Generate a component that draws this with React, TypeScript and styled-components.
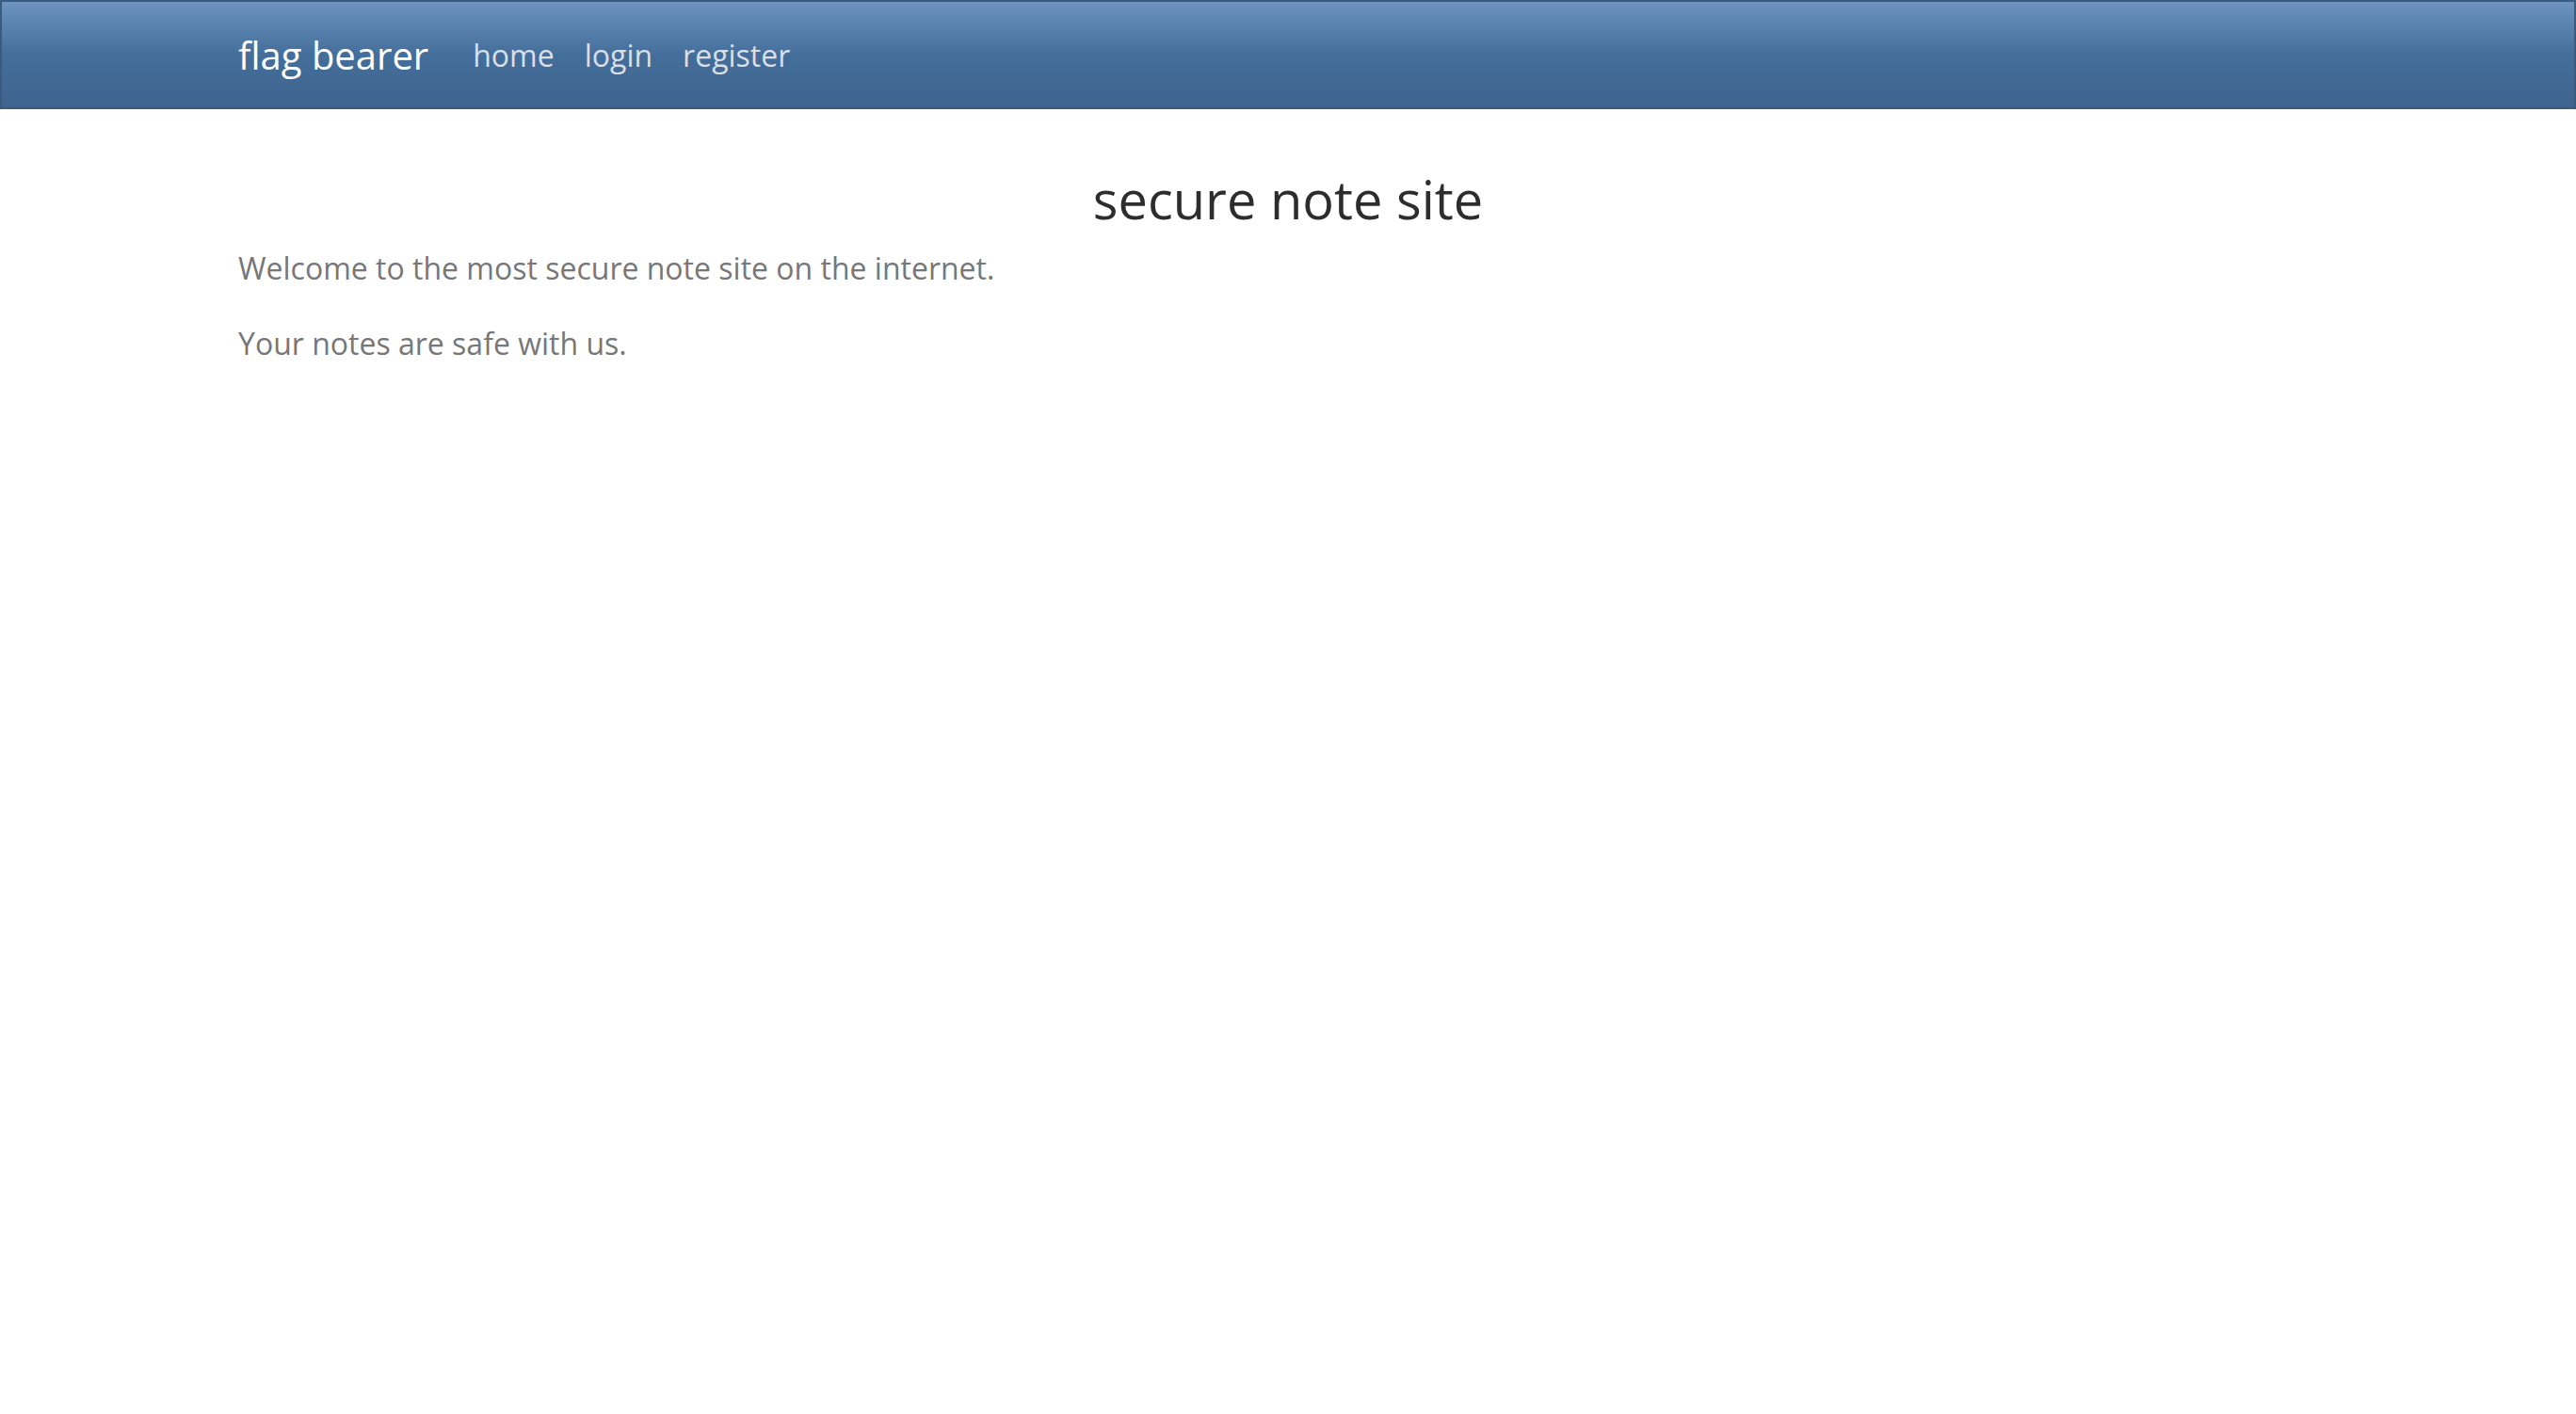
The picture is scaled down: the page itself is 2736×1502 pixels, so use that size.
import React from "react";
import styled, { createGlobalStyle } from "styled-components";

const GlobalStyle = createGlobalStyle`
  html, body {
    margin: 0;
    padding: 0;
    background: #ffffff;
  }
  body {
    font-family: "Open Sans", "Helvetica Neue", Arial, sans-serif;
    font-size: 32px;
    line-height: 48px;
    color: #777777;
  }
  * { box-sizing: border-box; }
`;

const NavBar = styled.nav`
  height: 116px;
  border: 2px solid #3a5b80;
  background-image: linear-gradient(#6d94bf, #446e9b 50%, #3e648d);
  display: flex;
  align-items: center;
`;

const Container = styled.div`
  width: 2230px;
  margin: 0 auto;
`;

const NavInner = styled(Container)`
  display: flex;
  align-items: center;
  padding-top: 2px;
`;

const Brand = styled.a`
  font-size: 40px;
  line-height: 60px;
  color: #ffffff;
  text-decoration: none;
  margin-right: 31px;
  white-space: nowrap;
`;

const NavList = styled.ul`
  display: flex;
  list-style: none;
  margin: 0;
  padding: 0;
`;

const NavLink = styled.a`
  display: block;
  font-size: 32px;
  line-height: 48px;
  padding: 0 16px;
  color: #d9dfe7;
  text-decoration: none;
`;

const Main = styled(Container)`
  padding-top: 62px;
`;

const Title = styled.h1`
  margin: 0 0 16px;
  font-size: 56px;
  line-height: 67px;
  font-weight: 400;
  color: #2d2d2d;
  text-align: center;
`;

const Paragraph = styled.p`
  margin: 0 0 32px;
  font-size: 32px;
  line-height: 48px;
  color: #777777;
`;

const links = ["home", "login", "register"];

export default function App() {
  return (
    <>
      <GlobalStyle />
      <NavBar>
        <NavInner>
          <Brand href="#">flag bearer</Brand>
          <NavList>
            {links.map((l) => (
              <li key={l}>
                <NavLink href="#">{l}</NavLink>
              </li>
            ))}
          </NavList>
        </NavInner>
      </NavBar>
      <Main>
        <Title>secure note site</Title>
        <Paragraph>Welcome to the most secure note site on the internet.</Paragraph>
        <Paragraph>Your notes are safe with us.</Paragraph>
      </Main>
    </>
  );
}
